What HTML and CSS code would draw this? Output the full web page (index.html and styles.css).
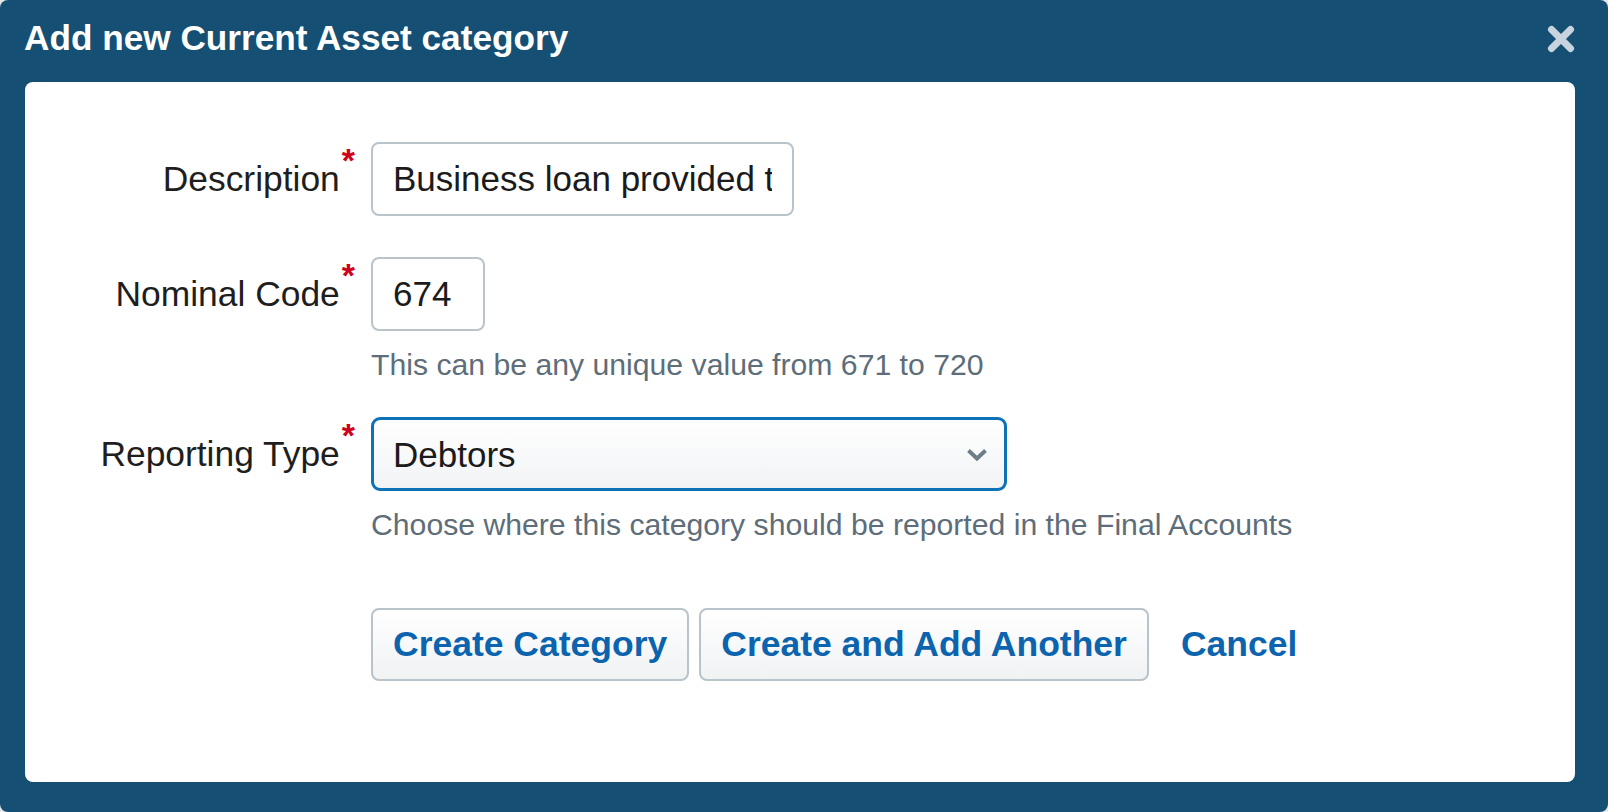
FILE: index.html
```html
<!DOCTYPE html>
<html lang="en">
<head>
<meta charset="utf-8">
<title>Add new Current Asset category</title>
<link rel="stylesheet" href="styles.css">
</head>
<body>
<div class="dialog">
  <header class="dialog-head">
    <h1 class="dialog-title">Add new Current Asset category</h1>
    <button class="close" type="button" aria-label="Close">
      <svg width="28" height="28" viewBox="0 0 28 28" aria-hidden="true">
        <path d="M4.5 4.5 L23.5 23.5 M23.5 4.5 L4.5 23.5" stroke="#c7d4de" stroke-width="7" stroke-linecap="round" fill="none"/>
      </svg>
    </button>
  </header>
  <div class="panel">
    <form class="form">
      <div class="row">
        <label class="label" for="desc">Description<span class="req">*</span></label>
        <div class="field">
          <input id="desc" class="input input-desc" type="text" value="Business loan provided to director">
        </div>
      </div>
      <div class="row row-code">
        <label class="label" for="code">Nominal Code<span class="req">*</span></label>
        <div class="field">
          <input id="code" class="input input-code" type="text" value="674">
          <p class="help">This can be any unique value from 671 to 720</p>
        </div>
      </div>
      <div class="row row-type">
        <label class="label" for="type">Reporting Type<span class="req">*</span></label>
        <div class="field">
          <div class="select-wrap">
            <select id="type" class="select">
              <option>Debtors</option>
              <option>Prepayments</option>
              <option>Other Debtors</option>
            </select>
            <svg class="chevron" width="22" height="14" viewBox="0 0 22 14" aria-hidden="true">
              <polyline points="2.5,2.5 11,10.5 19.5,2.5" fill="none" stroke="#6e7e89" stroke-width="4" stroke-linejoin="miter" stroke-linecap="butt"/>
            </svg>
          </div>
          <p class="help">Choose where this category should be reported in the Final Accounts</p>
        </div>
      </div>
      <div class="row row-actions">
        <div class="label"></div>
        <div class="field actions">
          <button class="btn" type="submit">Create Category</button>
          <button class="btn" type="button">Create and Add Another</button>
          <a class="cancel" href="#">Cancel</a>
        </div>
      </div>
    </form>
  </div>
</div>
</body>
</html>
```

FILE: styles.css
```css
* {
  box-sizing: border-box;
}

html, body {
  margin: 0;
  padding: 0;
}

body {
  background: #e4e6e8;
  font-family: "Liberation Sans", Arial, Helvetica, sans-serif;
  width: 1608px;
  height: 812px;
  overflow: hidden;
}

.dialog {
  width: 1608px;
  height: 812px;
  background: #154f73;
  border-radius: 8px;
  display: flex;
  flex-direction: column;
}

.dialog-head {
  height: 76px;
  display: flex;
  align-items: center;
  justify-content: space-between;
  padding: 0 33px 0 24px;
}

.dialog-title {
  margin: 0;
  font-size: 35.2px;
  line-height: 1;
  font-weight: bold;
  color: #ffffff;
}

.close {
  border: 0;
  background: none;
  padding: 0;
  width: 28px;
  height: 28px;
  display: flex;
  cursor: pointer;
  margin-top: 2px;
}

.panel {
  margin: 6px 33px 0 25px;
  height: 700px;
  background: #ffffff;
  border-radius: 8px;
  padding-top: 60px;
}

.form {
  display: flex;
  flex-direction: column;
  margin: 0;
}

.row {
  display: grid;
  grid-template-columns: 330px 1fr;
  column-gap: 16px;
  align-items: start;
}

.row-code {
  margin-top: 41px;
}

.row-type {
  margin-top: 35px;
}

.row-actions {
  margin-top: 66px;
}

.label {
  display: block;
  height: 74px;
  line-height: 74px;
  text-align: right;
  font-size: 35.4px;
  color: #1e1e1e;
  white-space: nowrap;
}

.req {
  color: #d0021b;
  font-weight: bold;
  font-size: 34px;
  line-height: 0;
  vertical-align: 19px;
  margin-left: 2px;
}

.field {
  display: flex;
  flex-direction: column;
  align-items: flex-start;
}

.input {
  height: 74px;
  border: 2px solid #b9c3ca;
  border-radius: 8px;
  padding: 0 20px;
  font-family: inherit;
  font-size: 35px;
  color: #1b1b1b;
  background: #ffffff;
  outline: none;
}

.input-desc {
  width: 423px;
}

.input-code {
  width: 114px;
}

.help {
  margin: 17px 0 0;
  font-size: 30.2px;
  line-height: 34px;
  color: #5d6d79;
  white-space: nowrap;
}

.select-wrap {
  position: relative;
  width: 636px;
  height: 74px;
}

.select {
  -webkit-appearance: none;
  appearance: none;
  width: 100%;
  height: 100%;
  border: 3px solid #0d72b8;
  border-radius: 9px;
  padding: 0 60px 0 19px;
  font-family: inherit;
  font-size: 35px;
  color: #1b1b1b;
  background: linear-gradient(#ffffff, #f1f3f5);
  outline: none;
}

.chevron {
  position: absolute;
  right: 19px;
  top: 31px;
  pointer-events: none;
}

.actions {
  flex-direction: row;
  align-items: center;
}

.btn {
  height: 73px;
  padding: 0 20px;
  border: 2px solid #b9c3ca;
  border-radius: 8px;
  background: linear-gradient(#ffffff, #f0f2f4);
  font-family: inherit;
  font-size: 35.5px;
  font-weight: bold;
  color: #0b64ad;
  cursor: pointer;
  white-space: nowrap;
}

.btn + .btn {
  margin-left: 10px;
}

.cancel {
  margin-left: 32px;
  font-size: 35.5px;
  font-weight: bold;
  color: #0b64ad;
  text-decoration: none;
}
```
